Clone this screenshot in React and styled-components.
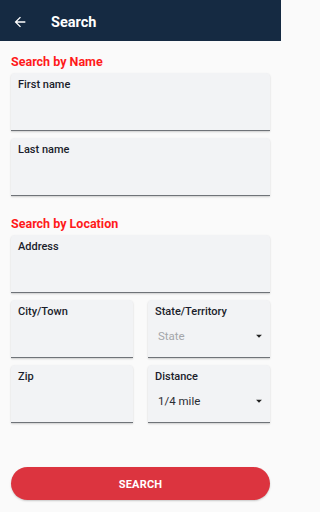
import React from 'react';
import styled, { createGlobalStyle } from 'styled-components';
import { MdArrowBack, MdArrowDropDown } from 'react-icons/md';

const GlobalStyle = createGlobalStyle`
  html, body {
    margin: 0;
    padding: 0;
    background: #fafafa;
  }
  body {
    font-family: Roboto, "Liberation Sans", sans-serif;
  }
`;

const Screen = styled.div`
  width: 281px;
  height: 512px;
  display: flex;
  flex-direction: column;
  background: #fafafa;
  overflow: hidden;
`;

const Header = styled.header`
  height: 41px;
  flex-shrink: 0;
  background: #152a42;
  display: flex;
  align-items: center;
  padding: 3px 12px 0;
  box-sizing: border-box;
  color: #fff;
`;

const BackButton = styled.span`
  display: inline-flex;
  width: 16px;
  font-size: 16px;
  margin-right: 23px;
`;

const Title = styled.h1`
  margin: 0;
  font-size: 14.5px;
  font-weight: 700;
`;

const Body = styled.div`
  flex: 1;
  display: flex;
  flex-direction: column;
  padding: 13px 11px 12px;
`;

const SectionTitle = styled.h2`
  margin: ${p => p.$top || 0}px 0 4px;
  font-size: 12.5px;
  line-height: 15px;
  font-weight: 700;
  color: #ff1a1a;
`;

const Row = styled.div`
  display: grid;
  grid-template-columns: ${p => (p.$split ? '1fr 1fr' : '1fr')};
  column-gap: 15px;
  margin-bottom: 7px;
`;

const Field = styled.div`
  height: 58px;
  box-sizing: border-box;
  background: #f2f3f5;
  border-radius: 4px 4px 0 0;
  border-bottom: 1.5px solid #6f7378;
  box-shadow: 0 1px 2px rgba(0, 0, 0, 0.18);
  padding: 5px 7px 0;
  display: flex;
  flex-direction: column;
`;

const Label = styled.label`
  font-size: 11px;
  line-height: 14px;
  font-weight: 500;
  color: #1b1d2b;
`;

const Select = styled.div`
  margin-top: 10px;
  display: flex;
  align-items: center;
  justify-content: space-between;
  padding-left: 3px;
  font-size: 11.5px;
  color: ${p => (p.$placeholder ? '#a4a6aa' : '#2a2c33')};
`;

const Caret = styled.span`
  display: inline-flex;
  font-size: 14px;
  color: #222;
  margin-right: -3px;
`;

const SearchButton = styled.button`
  margin-top: auto;
  height: 33px;
  width: 100%;
  border: none;
  border-radius: 17px;
  background: #dc343f;
  color: #fff;
  font-family: Roboto, "Liberation Sans", sans-serif;
  font-size: 11px;
  font-weight: 700;
  letter-spacing: 0.2px;
  padding-top: 2px;
  box-shadow: 0 1px 2px rgba(0, 0, 0, 0.2);
`;

function TextField({ label }) {
  return (
    <Field>
      <Label>{label}</Label>
    </Field>
  );
}

function SelectField({ label, value, placeholder }) {
  return (
    <Field>
      <Label>{label}</Label>
      <Select $placeholder={placeholder}>
        {value}
        <Caret><MdArrowDropDown /></Caret>
      </Select>
    </Field>
  );
}

export default function App() {
  return (
    <>
      <GlobalStyle />
      <Screen>
        <Header>
          <BackButton><MdArrowBack /></BackButton>
          <Title>Search</Title>
        </Header>
        <Body>
          <SectionTitle>Search by Name</SectionTitle>
          <Row><TextField label="First name" /></Row>
          <Row><TextField label="Last name" /></Row>

          <SectionTitle $top={13}>Search by Location</SectionTitle>
          <Row><TextField label="Address" /></Row>
          <Row $split>
            <TextField label="City/Town" />
            <SelectField label="State/Territory" value="State" placeholder />
          </Row>
          <Row $split>
            <TextField label="Zip" />
            <SelectField label="Distance" value="1/4 mile" />
          </Row>

          <SearchButton>SEARCH</SearchButton>
        </Body>
      </Screen>
    </>
  );
}
